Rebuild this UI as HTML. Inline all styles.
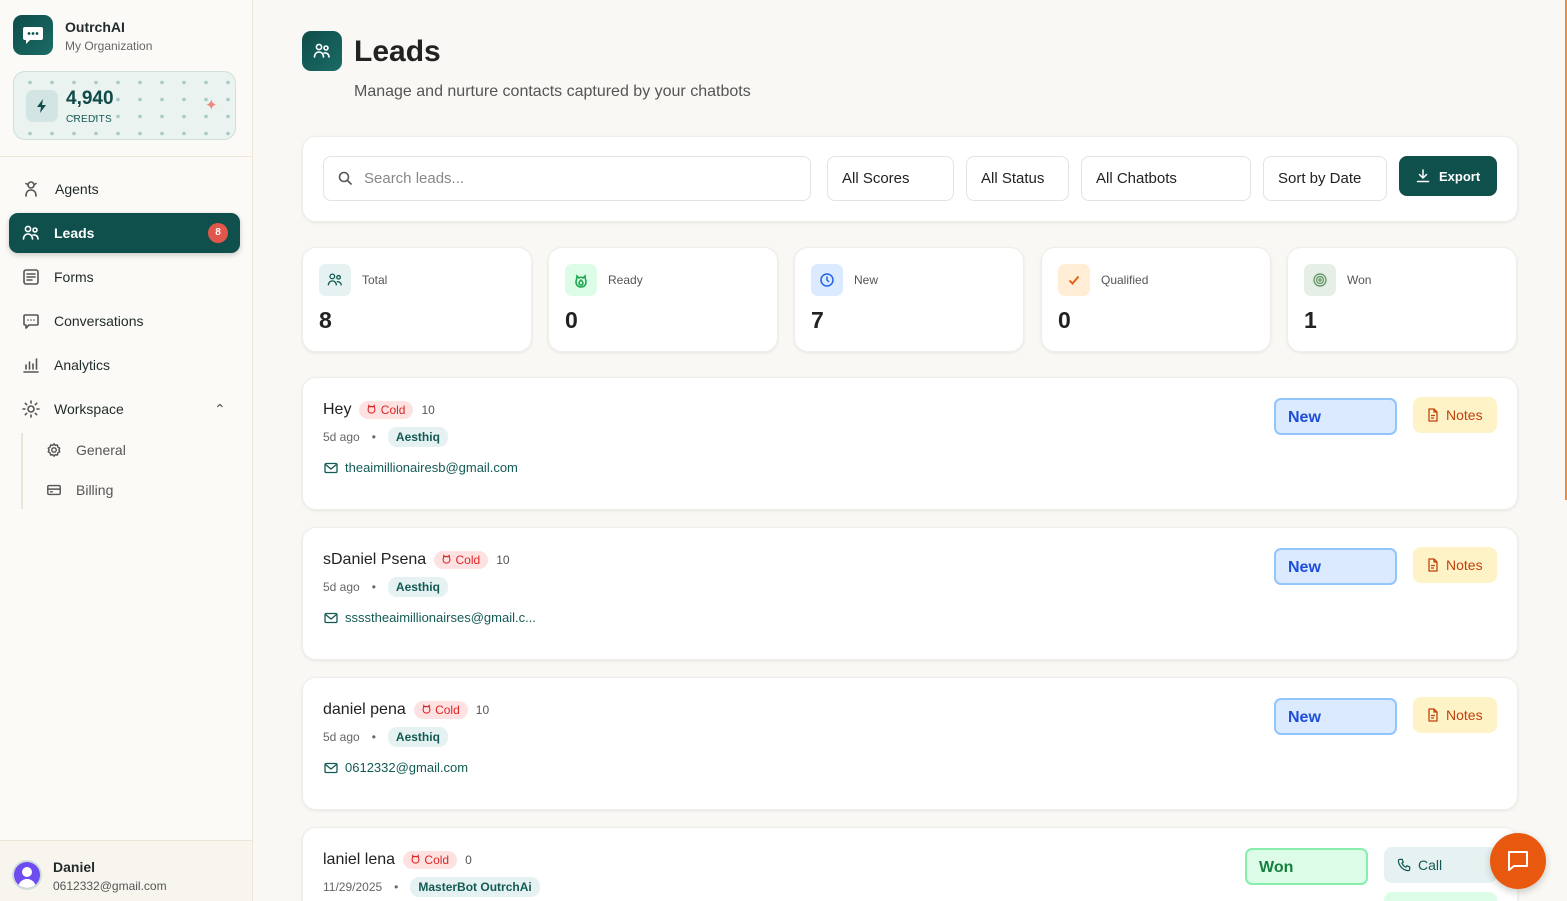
<!DOCTYPE html>
<html style="width:1567px;height:901px;overflow:hidden"><head><meta charset="utf-8"><style>
*{box-sizing:border-box;margin:0;padding:0}
body{width:1567px;height:901px;overflow:hidden;background:#faf8f5;font-family:"Liberation Sans","DejaVu Sans",sans-serif;color:#1f2a2a;position:relative}
.a{position:absolute}
.side{left:0;top:0;width:253px;height:901px;background:#fcfaf6;border-right:1px solid #efe7da}
.nav{left:22px;font-size:14px;color:#1f2a2a;display:flex;align-items:center;gap:14px}
.nav svg{width:18px;height:18px;fill:none;stroke:#555;stroke-width:1.6;stroke-linecap:round;stroke-linejoin:round}
.card{background:#fff;border-radius:14px;box-shadow:0 1px 3px rgba(0,0,0,.08);border:1px solid #f0eeea}
.sel{top:156px;height:45px;border:1px solid #e3e3e3;border-radius:8px;font-size:15px;padding:13px 14px;color:#222;background:#fff}
.stat{top:247px;width:230px;height:105px}
.stat .ic{position:absolute;left:16px;top:16px;width:32px;height:32px;border-radius:7px;display:flex;align-items:center;justify-content:center}
.stat .lb{position:absolute;left:59px;top:25px;font-size:12px;color:#555}
.stat .n{position:absolute;left:16px;top:59px;font-size:23px;font-weight:bold;color:#222}
.lead{left:302px;width:1216px;height:133px}
.nm{position:absolute;left:20px;top:23px;font-size:16px;color:#222;display:flex;align-items:center;gap:8px}
.cold{background:#fee2e2;color:#dc2626;font-size:12px;border-radius:10px;padding:2px 8px 2px 7px}
.sc{font-size:12px;color:#555}
.meta{position:absolute;left:20px;top:49px;font-size:12px;color:#666;display:flex;align-items:center;gap:12px}
.tag{background:#e6f2f1;color:#135a55;font-weight:bold;font-size:12px;border-radius:9px;padding:3px 8px}
.em{position:absolute;left:21px;top:82px;font-size:13px;color:#135a55;display:flex;align-items:center;gap:7px}
.st{position:absolute;left:971px;top:20px;width:123px;height:37px;border-radius:7px;background:#dbeafe;border:2px solid #93c5fd;color:#1d4ed8;font-weight:bold;font-size:16px;padding:9px 12px 0}
.nt{position:absolute;left:1110px;top:19px;width:84px;height:36px;border-radius:8px;background:#fef3c7;color:#c2410c;font-size:14px;display:flex;align-items:center;gap:6px;padding-left:13px}
</style></head><body>
<div class="a side">
 <div class="a" style="left:13px;top:15px;width:40px;height:40px;border-radius:9px;background:linear-gradient(135deg,#0e4d4a,#1b6b66);display:flex;align-items:center;justify-content:center">
  <svg width="22" height="20" viewBox="0 0 22 20"><path d="M3 2h16a2 2 0 0 1 2 2v9a2 2 0 0 1-2 2H8l-4 4v-4H3a2 2 0 0 1-2-2V4a2 2 0 0 1 2-2z" fill="#fff"/><circle cx="7" cy="8.5" r="1.4" fill="#0f5350"/><circle cx="11" cy="8.5" r="1.4" fill="#0f5350"/><circle cx="15" cy="8.5" r="1.4" fill="#0f5350"/></svg></div>
 <div class="a" style="left:65px;top:19px;font-size:14px;font-weight:bold">OutrchAI</div>
 <div class="a" style="left:65px;top:39px;font-size:12px;color:#666">My Organization</div>
 <div class="a" style="left:13px;top:71px;width:223px;height:69px;border-radius:12px;border:1px solid #cfe0dc;background-color:#eaf3f0;background-image:radial-gradient(circle,#a9c9c2 1.6px,transparent 2px);background-size:22px 17px;background-position:5px 2px"></div>
 <div class="a" style="left:26px;top:90px;width:32px;height:32px;border-radius:7px;background:#d3e5e2;display:flex;align-items:center;justify-content:center"><svg width="12" height="14" viewBox="0 0 12 14"><path d="M7 0L1 8h4l-1 6 6-8H6z" fill="#0f4a47"/></svg></div>
 <div class="a" style="left:66px;top:88px;font-size:19px;font-weight:bold;color:#0f4a47">4,940</div>
 <div class="a" style="left:66px;top:114px;font-size:10px;color:#135a55;letter-spacing:.3px">CREDITS</div>
 <div class="a" style="left:205px;top:96px;color:#e98a7d;font-size:15px">✦</div>
 <div class="a" style="left:0;top:156px;width:252px;height:1px;background:#efe7da"></div>
 <div class="a nav" style="top:180px"><svg viewBox="0 0 18 18"><circle cx="9" cy="5" r="3"/><path d="M4 3.5l1.5 1M14 3.5l-1.5 1M4 16c0-4 2-6 5-6s5 2 5 6"/></svg><span style="margin-left:1px">Agents</span></div>
 <div class="a" style="left:9px;top:213px;width:231px;height:40px;border-radius:9px;background:#0f4f4c;box-shadow:0 2px 6px rgba(0,0,0,.2)"></div>
 <div class="a nav" style="top:224px;color:#fff;font-weight:bold"><svg viewBox="0 0 18 18" style="stroke:#fff"><circle cx="6" cy="5" r="2.6"/><circle cx="13" cy="6" r="2"/><path d="M1.5 15c0-3 2-5 4.5-5s4.5 2 4.5 5M11 11c2.5-.5 5 1 5 4"/></svg><span>Leads</span></div>
 <div class="a" style="left:208px;top:223px;width:20px;height:20px;border-radius:50%;background:#e2574c;color:#fff;font-size:10px;font-weight:bold;text-align:center;line-height:20px">8</div>
 <div class="a nav" style="top:268px"><svg viewBox="0 0 18 18"><rect x="2" y="2" width="14" height="14" rx="2"/><path d="M5 6h8M5 9h8M5 12h5"/></svg><span>Forms</span></div>
 <div class="a nav" style="top:312px"><svg viewBox="0 0 18 18"><path d="M3 3h12a1 1 0 0 1 1 1v8a1 1 0 0 1-1 1H7l-3 3v-3H3a1 1 0 0 1-1-1V4a1 1 0 0 1 1-1z"/><path d="M6 8h.01M9 8h.01M12 8h.01"/></svg><span>Conversations</span></div>
 <div class="a nav" style="top:356px"><svg viewBox="0 0 18 18"><path d="M2 16h14M4 13V9M7.5 13V6M11 13V8M14.5 13V3"/></svg><span>Analytics</span></div>
 <div class="a nav" style="top:400px"><svg viewBox="0 0 18 18"><circle cx="9" cy="9" r="3"/><path d="M9 1v2M9 15v2M1 9h2M15 9h2M3.3 3.3l1.4 1.4M13.3 13.3l1.4 1.4M3.3 14.7l1.4-1.4M13.3 4.7l1.4-1.4"/></svg><span>Workspace</span></div>
 <div class="a" style="left:214px;top:401px;font-size:14px;color:#555">⌃</div>
 <div class="a" style="left:21px;top:433px;width:2px;height:76px;background:#ece4d6"></div>
 <div class="a nav" style="left:46px;top:442px;color:#555"><svg viewBox="0 0 18 18" style="width:16px;height:16px"><circle cx="9" cy="9" r="2.5"/><path d="M9 2l1.5 1.8 2.3-.5.5 2.3L15.5 7 14.5 9l1 2-2.2 1.4-.5 2.3-2.3-.5L9 16l-1.5-1.8-2.3.5-.5-2.3L2.5 11l1-2-1-2 2.2-1.4.5-2.3 2.3.5z"/></svg><span>General</span></div>
 <div class="a nav" style="left:46px;top:482px;color:#555"><svg viewBox="0 0 18 18" style="width:16px;height:16px"><rect x="2" y="4" width="14" height="10" rx="1.5"/><path d="M2 8h14M5 11h2"/></svg><span>Billing</span></div>
 <div class="a" style="left:0;top:840px;width:252px;height:61px;background:#f8f5ef;border-top:1px solid #ece4d6"></div>
 <div class="a" style="left:12px;top:860px;width:30px;height:30px;border-radius:50%;background:#6d4cf0;border:2px solid #d0dcdc;overflow:hidden"><div class="a" style="left:8px;top:5px;width:10px;height:10px;border-radius:50%;background:#fff"></div><div class="a" style="left:4px;top:17px;width:18px;height:12px;border-radius:9px 9px 0 0;background:#fff"></div></div>
 <div class="a" style="left:53px;top:859px;font-size:14px;font-weight:bold">Daniel</div>
 <div class="a" style="left:53px;top:879px;font-size:12px;color:#555">0612332@gmail.com</div>
</div>

<div class="a" style="left:302px;top:31px;width:40px;height:40px;border-radius:9px;background:linear-gradient(135deg,#0e4d4a,#1b6b66);display:flex;align-items:center;justify-content:center"><svg width="18" height="18" viewBox="0 0 18 18" fill="none" stroke="#fff" stroke-width="1.6" stroke-linecap="round"><circle cx="6" cy="5" r="2.6"/><circle cx="13" cy="6" r="2"/><path d="M1.5 15c0-3 2-5 4.5-5s4.5 2 4.5 5M11 11c2.5-.5 5 1 5 4"/></svg></div>
<div class="a" style="left:354px;top:35px;font-size:30px;font-weight:bold;color:#222">Leads</div>
<div class="a" style="left:354px;top:83px;font-size:16px;color:#555">Manage and nurture contacts captured by your chatbots</div>

<div class="a card" style="left:302px;top:136px;width:1216px;height:86px"></div>
<div class="a sel" style="left:323px;width:488px;color:#888;padding-left:40px">Search leads...</div>
<svg class="a" style="left:338px;top:171px" width="15" height="15" viewBox="0 0 15 15" fill="none" stroke="#555" stroke-width="1.6"><circle cx="6" cy="6" r="4.5"/><path d="M9.5 9.5l4 4"/></svg>
<div class="a sel" style="left:827px;width:127px">All Scores</div>
<div class="a sel" style="left:966px;width:103px">All Status</div>
<div class="a sel" style="left:1081px;width:170px">All Chatbots</div>
<div class="a sel" style="left:1263px;width:124px">Sort by Date</div>
<div class="a" style="left:1399px;top:156px;width:98px;height:40px;border-radius:8px;background:#0f4f4c;color:#fff;font-size:13px;font-weight:bold;display:flex;align-items:center;gap:9px;padding-left:17px"><svg width="14" height="14" viewBox="0 0 14 14" fill="none" stroke="#fff" stroke-width="1.5" stroke-linecap="round"><path d="M7 1v8M3.5 5.5L7 9l3.5-3.5M1.5 12.5h11"/></svg>Export</div>

<div class="a card stat" style="left:302px"><div class="ic" style="background:#e6f2f1"><svg width="16" height="16" viewBox="0 0 18 18" fill="none" stroke="#135a55" stroke-width="1.5"><circle cx="6" cy="5" r="2.6"/><circle cx="13" cy="6" r="2"/><path d="M1.5 15c0-3 2-5 4.5-5s4.5 2 4.5 5M11 11c2.5-.5 5 1 5 4"/></svg></div><div class="lb">Total</div><div class="n">8</div></div>
<div class="a card stat" style="left:548px"><div class="ic" style="background:#dcfce7"><svg width="16" height="16" viewBox="0 0 16 16" fill="none" stroke="#16a34a" stroke-width="1.5"><path d="M8 15c3 0 5-2 5-5 0-2-1-3-1-6l-2 2C9 5 7 5 6 6L4 4c0 3-1 4-1 6 0 3 2 5 5 5z"/><path d="M8 13c1.2 0 2-.8 2-2 0-1-1-2-2-3-1 1-2 2-2 3 0 1.2.8 2 2 2z"/></svg></div><div class="lb">Ready</div><div class="n">0</div></div>
<div class="a card stat" style="left:794px"><div class="ic" style="background:#dbeafe"><svg width="16" height="16" viewBox="0 0 16 16" fill="none" stroke="#2563eb" stroke-width="1.5"><circle cx="8" cy="8" r="6"/><path d="M8 4.5V8l2 2"/></svg></div><div class="lb">New</div><div class="n">7</div></div>
<div class="a card stat" style="left:1041px"><div class="ic" style="background:#ffedd5"><svg width="14" height="14" viewBox="0 0 14 14" fill="none" stroke="#ea580c" stroke-width="1.8"><path d="M2.5 7.5l3 3 6-7"/></svg></div><div class="lb">Qualified</div><div class="n">0</div></div>
<div class="a card stat" style="left:1287px"><div class="ic" style="background:#e6efe5"><svg width="16" height="16" viewBox="0 0 16 16" fill="none" stroke="#6b9a6b" stroke-width="1.4"><circle cx="8" cy="8" r="6"/><circle cx="8" cy="8" r="3.5"/><circle cx="8" cy="8" r="1"/></svg></div><div class="lb">Won</div><div class="n">1</div></div>

<svg width="0" height="0" style="position:absolute"><defs>
<symbol id="fl" viewBox="0 0 12 12"><path d="M6 11c2.2 0 3.7-1.5 3.7-3.7 0-1.5-.7-2.2-.7-4.5L7.5 4.3C6.7 3.7 5.3 3.7 4.5 4.3L3 2.8c0 2.3-.7 3-.7 4.5C2.3 9.5 3.8 11 6 11z" fill="none" stroke="#dc2626" stroke-width="1.2"/></symbol>
<symbol id="ml" viewBox="0 0 14 14"><rect x="1" y="2.5" width="12" height="9" rx="1.3" fill="none" stroke="#135a55" stroke-width="1.3"/><path d="M1.5 3.5L7 8l5.5-4.5" fill="none" stroke="#135a55" stroke-width="1.3"/></symbol>
<symbol id="nt" viewBox="0 0 14 14"><path d="M3 1h5l3 3v9H3z M8 1v3h3 M5 7.5h4M5 10h3" fill="none" stroke="#c2410c" stroke-width="1.3" stroke-linejoin="round"/></symbol>
</defs></svg>

<div class="a card lead" style="top:377px"><div class="nm">Hey <span class="cold"><svg width="11" height="11"><use href="#fl"/></svg> Cold</span><span class="sc">10</span></div><div class="meta">5d ago <span>•</span><span class="tag">Aesthiq</span></div><div class="em"><svg width="14" height="14"><use href="#ml"/></svg>theaimillionairesb@gmail.com</div><div class="st">New</div><div class="nt"><svg width="14" height="14"><use href="#nt"/></svg>Notes</div></div>
<div class="a card lead" style="top:527px"><div class="nm">sDaniel Psena <span class="cold"><svg width="11" height="11"><use href="#fl"/></svg> Cold</span><span class="sc">10</span></div><div class="meta">5d ago <span>•</span><span class="tag">Aesthiq</span></div><div class="em"><svg width="14" height="14"><use href="#ml"/></svg>sssstheaimillionairses@gmail.c...</div><div class="st">New</div><div class="nt"><svg width="14" height="14"><use href="#nt"/></svg>Notes</div></div>
<div class="a card lead" style="top:677px"><div class="nm">daniel pena <span class="cold"><svg width="11" height="11"><use href="#fl"/></svg> Cold</span><span class="sc">10</span></div><div class="meta">5d ago <span>•</span><span class="tag">Aesthiq</span></div><div class="em"><svg width="14" height="14"><use href="#ml"/></svg>0612332@gmail.com</div><div class="st">New</div><div class="nt"><svg width="14" height="14"><use href="#nt"/></svg>Notes</div></div>
<div class="a card lead" style="top:827px;height:90px"><div class="nm">laniel lena <span class="cold"><svg width="11" height="11"><use href="#fl"/></svg> Cold</span><span class="sc">0</span></div><div class="meta">11/29/2025 <span>•</span><span class="tag">MasterBot OutrchAi</span></div>
<div class="st" style="left:942px;background:#dcfce7;border-color:#86efac;color:#15803d">Won</div>
<div class="nt" style="left:1081px;width:113px;background:#e6f2f1;color:#135a55"><svg width="15" height="15" viewBox="0 0 16 16" fill="none" stroke="#135a55" stroke-width="1.3"><path d="M3 1.5h2.5l1.2 3-1.5 1a8 8 0 0 0 4.3 4.3l1-1.5 3 1.2V12a1.5 1.5 0 0 1-1.5 1.5A11.5 11.5 0 0 1 1.5 3 1.5 1.5 0 0 1 3 1.5z"/></svg>Call</div>
<div class="a" style="left:1081px;top:64px;width:113px;height:20px;border-radius:8px;background:#dcfce7"></div></div>

<div class="a" style="left:1490px;top:833px;width:56px;height:56px;border-radius:50%;background:#e8580f;box-shadow:0 3px 8px rgba(0,0,0,.2);display:flex;align-items:center;justify-content:center"><svg width="24" height="24" viewBox="0 0 24 24" fill="none" stroke="#fff" stroke-width="2" stroke-linejoin="round"><path d="M3 3h18v14H8l-5 4z"/></svg></div>
<div class="a" style="left:1565px;top:0;width:2px;height:500px;background:#f08a3c"></div>
</body></html>
